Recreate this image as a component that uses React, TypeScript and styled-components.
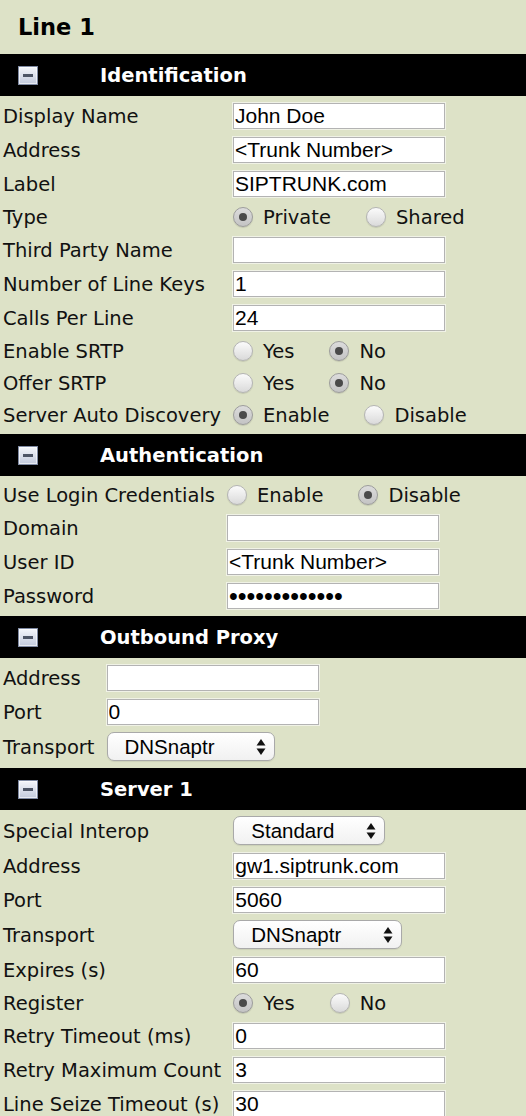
import React from "react";
import styled, { createGlobalStyle } from "styled-components";

const BG = "#dde2c7";

const GlobalStyle = createGlobalStyle`
  html, body {
    margin: 0;
    padding: 0;
    background: ${BG};
  }
  body {
    font-family: "DejaVu Sans", Verdana, sans-serif;
    color: #111;
  }
`;

const Page = styled.div`
  width: 526px;
  background: ${BG};
`;

const PageTitle = styled.h1`
  margin: 0;
  height: 54px;
  display: flex;
  align-items: center;
  padding-left: 18px;
  font-family: "DejaVu Sans", Verdana, sans-serif;
  font-weight: bold;
  font-size: 22.5px;
  color: #000;
`;

const SectionHeader = styled.div`
  height: 42px;
  background: #000;
  display: flex;
  align-items: center;
  padding-left: 18px;
`;

const ToggleIcon = styled.span`
  width: 20px;
  height: 19px;
  box-sizing: border-box;
  border: 1px solid #7f8aa3;
  background: linear-gradient(#f4f6fb, #c3cbdd);
  box-shadow: inset 0 0 0 1px rgba(255, 255, 255, 0.6);
  display: flex;
  align-items: center;
  justify-content: center;
  margin-right: 62px;
  flex: none;
  &::after {
    content: "";
    width: 10px;
    height: 3px;
    background: #4d5566;
  }
`;

const SectionTitle = styled.h2`
  margin: 0;
  font-family: "DejaVu Sans", Verdana, sans-serif;
  font-weight: bold;
  font-size: 19.5px;
  color: #fff;
`;

const FormGrid = styled.div`
  display: grid;
  grid-template-columns: max-content max-content;
  column-gap: 12px;
  align-items: center;
  padding: 3px 0;
`;

const FieldLabel = styled.div`
  padding-left: 3px;
  font-size: 19.5px;
  white-space: nowrap;
`;

const InputCell = styled.div`
  padding: 4px 0;
  display: flex;
`;

const TextField = styled.input<{ $password?: boolean }>`
  width: 212px;
  height: 26px;
  box-sizing: border-box;
  margin: 0;
  padding: 0 1px;
  border: 1px solid #b3b3b3;
  box-shadow: 0 0 0 1px rgba(255, 255, 255, 0.55);
  background: #fff;
  font-family: "Liberation Sans", Arial, sans-serif;
  font-size: ${(p) => (p.$password ? "25px" : "21px")};
  color: #000;
  outline: none;
`;

const RadioGroup = styled.div`
  height: 32px;
  display: flex;
  align-items: center;
`;

const RadioOption = styled.label`
  display: flex;
  align-items: center;
  margin-right: 35px;
  font-size: 19.5px;
  white-space: nowrap;
`;

const RadioDot = styled.span<{ $checked: boolean }>`
  width: 20px;
  height: 20px;
  box-sizing: border-box;
  border-radius: 50%;
  border: 1px solid ${(p) => (p.$checked ? "#9c9c9c" : "#b4b4b4")};
  background: ${(p) =>
    p.$checked
      ? "linear-gradient(#dcdcdc, #c4c4c4)"
      : "linear-gradient(#fbfbfb, #dadada)"};
  box-shadow: 0 1px 1px rgba(0, 0, 0, 0.12);
  display: flex;
  align-items: center;
  justify-content: center;
  margin-right: 10px;
  flex: none;
  &::after {
    content: "";
    width: 8px;
    height: 8px;
    border-radius: 50%;
    background: #4a4a4a;
    display: ${(p) => (p.$checked ? "block" : "none")};
  }
`;

const SelectCell = styled.div`
  padding: 3px 0 4px;
  display: flex;
`;

const SelectBox = styled.div<{ $width: number }>`
  width: ${(p) => p.$width}px;
  height: 29px;
  box-sizing: border-box;
  border: 1px solid #a9a9a9;
  border-radius: 7px;
  background: linear-gradient(#ffffff, #f1f1f1);
  box-shadow: 0 1px 1px rgba(0, 0, 0, 0.08);
  display: flex;
  align-items: center;
  justify-content: space-between;
  padding: 0 8px 0 17px;
  font-family: "Liberation Sans", Arial, sans-serif;
  font-size: 20.5px;
  color: #000;
`;

const Arrows = () => (
  <svg width="10" height="18" viewBox="0 0 10 18">
    <path d="M5 1 L9.5 7.5 L0.5 7.5 Z" fill="#111" />
    <path d="M5 17 L9.5 10.5 L0.5 10.5 Z" fill="#111" />
  </svg>
);

type Field =
  | { kind: "text"; label: string; value: string; password?: boolean }
  | { kind: "radio"; label: string; options: string[]; checked: number }
  | { kind: "select"; label: string; value: string; width: number };

type Section = { title: string; fields: Field[] };

const sections: Section[] = [
  {
    title: "Identification",
    fields: [
      { kind: "text", label: "Display Name", value: "John Doe" },
      { kind: "text", label: "Address", value: "<Trunk Number>" },
      { kind: "text", label: "Label", value: "SIPTRUNK.com" },
      { kind: "radio", label: "Type", options: ["Private", "Shared"], checked: 0 },
      { kind: "text", label: "Third Party Name", value: "" },
      { kind: "text", label: "Number of Line Keys", value: "1" },
      { kind: "text", label: "Calls Per Line", value: "24" },
      { kind: "radio", label: "Enable SRTP", options: ["Yes", "No"], checked: 1 },
      { kind: "radio", label: "Offer SRTP", options: ["Yes", "No"], checked: 1 },
      {
        kind: "radio",
        label: "Server Auto Discovery",
        options: ["Enable", "Disable"],
        checked: 0,
      },
    ],
  },
  {
    title: "Authentication",
    fields: [
      {
        kind: "radio",
        label: "Use Login Credentials",
        options: ["Enable", "Disable"],
        checked: 1,
      },
      { kind: "text", label: "Domain", value: "" },
      { kind: "text", label: "User ID", value: "<Trunk Number>" },
      { kind: "text", label: "Password", value: "xxxxxxxxxxxxx", password: true },
    ],
  },
  {
    title: "Outbound Proxy",
    fields: [
      { kind: "text", label: "Address", value: "" },
      { kind: "text", label: "Port", value: "0" },
      { kind: "select", label: "Transport", value: "DNSnaptr", width: 168 },
    ],
  },
  {
    title: "Server 1",
    fields: [
      { kind: "select", label: "Special Interop", value: "Standard", width: 152 },
      { kind: "text", label: "Address", value: "gw1.siptrunk.com" },
      { kind: "text", label: "Port", value: "5060" },
      { kind: "select", label: "Transport", value: "DNSnaptr", width: 169 },
      { kind: "text", label: "Expires (s)", value: "60" },
      { kind: "radio", label: "Register", options: ["Yes", "No"], checked: 0 },
      { kind: "text", label: "Retry Timeout (ms)", value: "0" },
      { kind: "text", label: "Retry Maximum Count", value: "3" },
      { kind: "text", label: "Line Seize Timeout (s)", value: "30" },
    ],
  },
];

const Control = ({ field }: { field: Field }) => {
  if (field.kind === "text") {
    return (
      <InputCell>
        <TextField
          type={field.password ? "password" : "text"}
          $password={field.password}
          defaultValue={field.value}
          readOnly
        />
      </InputCell>
    );
  }
  if (field.kind === "radio") {
    return (
      <RadioGroup>
        {field.options.map((opt, i) => (
          <RadioOption key={opt}>
            <RadioDot $checked={i === field.checked} />
            {opt}
          </RadioOption>
        ))}
      </RadioGroup>
    );
  }
  return (
    <SelectCell>
      <SelectBox $width={field.width}>
        <span>{field.value}</span>
        <Arrows />
      </SelectBox>
    </SelectCell>
  );
};

export default function App() {
  return (
    <Page>
      <GlobalStyle />
      <PageTitle>Line 1</PageTitle>
      {sections.map((s) => (
        <section key={s.title}>
          <SectionHeader>
            <ToggleIcon />
            <SectionTitle>{s.title}</SectionTitle>
          </SectionHeader>
          <FormGrid>
            {s.fields.map((f, i) => (
              <React.Fragment key={i}>
                <FieldLabel>{f.label}</FieldLabel>
                <Control field={f} />
              </React.Fragment>
            ))}
          </FormGrid>
        </section>
      ))}
    </Page>
  );
}
